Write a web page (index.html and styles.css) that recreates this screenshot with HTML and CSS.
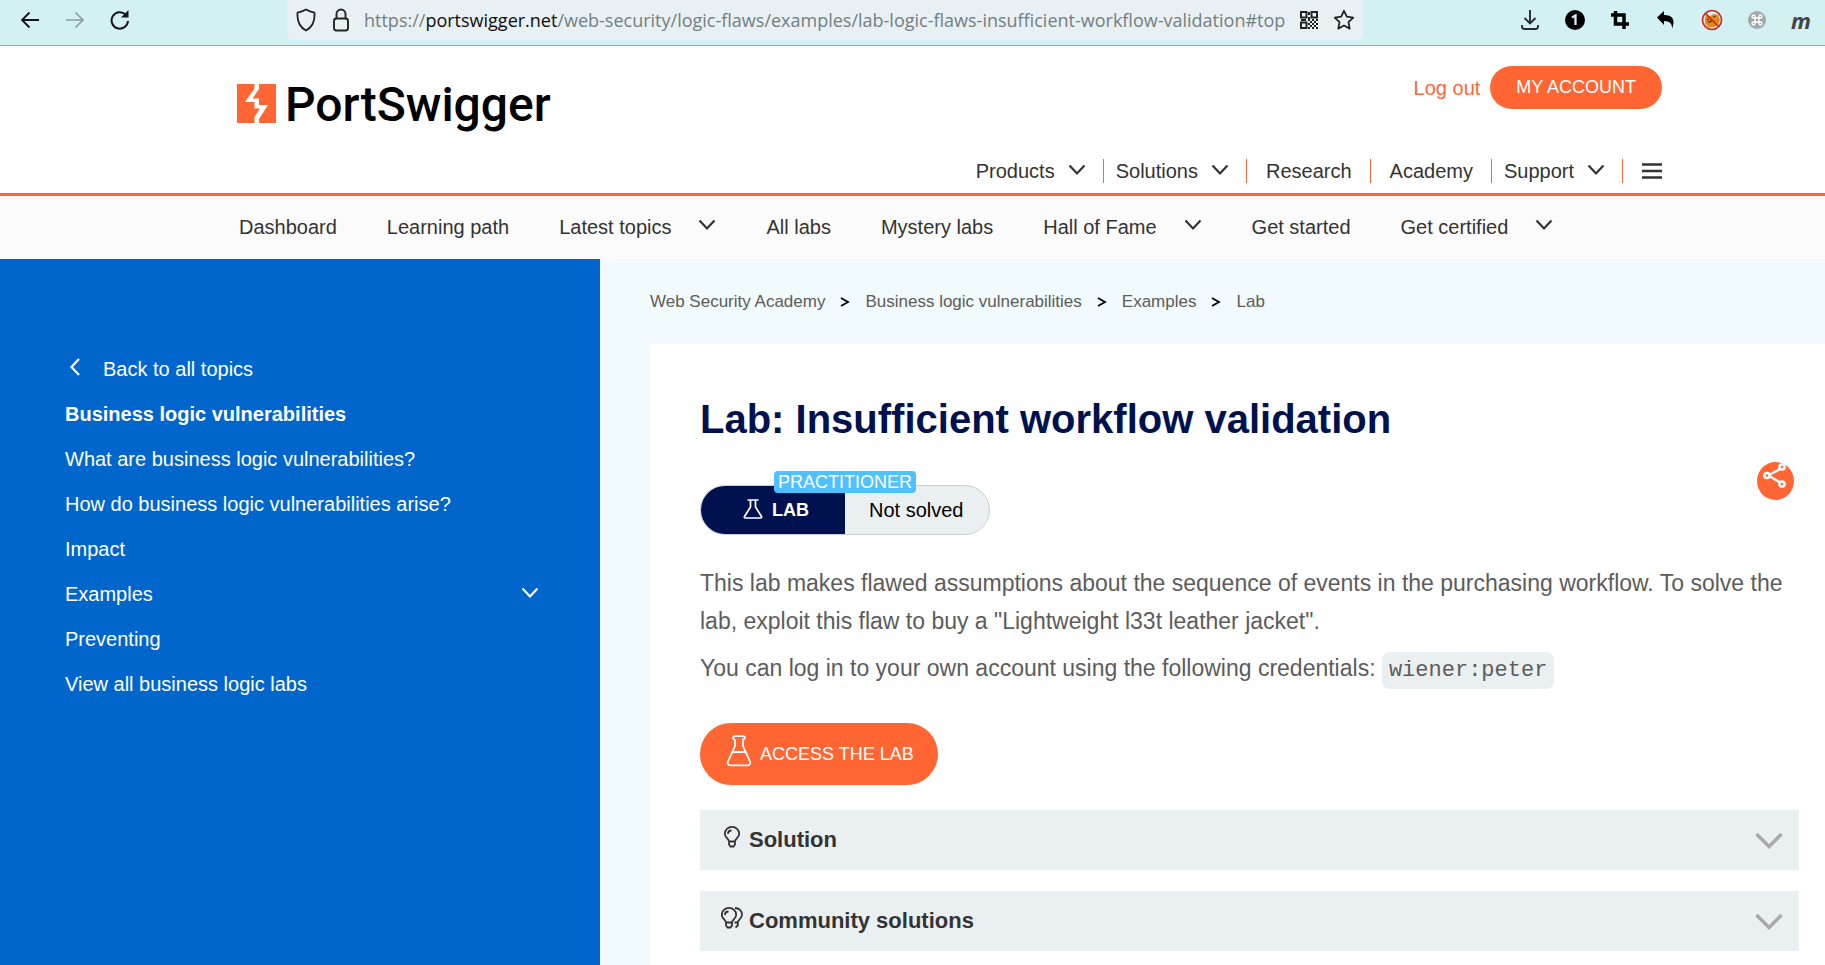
FILE: index.html
```html
<!DOCTYPE html>
<html lang="en">
<head>
<meta charset="utf-8">
<title>Lab: Insufficient workflow validation</title>
<link rel="stylesheet" href="styles.css">
</head>
<body>
<svg class="defs" aria-hidden="true">
  <symbol id="chev" viewBox="0 0 18 12"><path d="M1.5 1.5 9 9.5l7.500-8" fill="none" stroke="currentColor" stroke-width="2.200"/></symbol>
</svg>

<div class="browser">
  <div class="nav-buttons">
    <button aria-label="Back"><svg width="20" height="20" viewBox="0 0 20 20"><path d="M19 10H2M9.500 2.500 2 10l7.500 7.500" fill="none" stroke="#15141a" stroke-width="1.800"/></svg></button>
    <button aria-label="Forward"><svg width="20" height="20" viewBox="0 0 20 20"><path d="M1 10h17M10.500 2.500 18 10l-7.500 7.500" fill="none" stroke="#8b9a9c" stroke-width="1.600"/></svg></button>
    <button aria-label="Reload"><svg width="20" height="22" viewBox="0 0 20 22"><path d="M15.500 5.500A8.200 8.200 0 1 0 18 12" fill="none" stroke="#15141a" stroke-width="2"/><path d="M18.500 1v7.500H11z" fill="#15141a"/></svg></button>
  </div>
  <div class="urlbar">
    <svg width="20" height="24" viewBox="0 0 20 24"><path d="M10 1.500C12.500 3 15 4 18.500 4.700c.5 7-1.500 14-8.500 17.800C3 18.700 1 11.700 1.500 4.700 5 4 7.500 3 10 1.500z" fill="none" stroke="#222" stroke-width="1.800" stroke-linejoin="round"/></svg>
    <svg class="lock" width="18" height="24" viewBox="0 0 18 24"><rect x="2" y="10.500" width="14" height="12" rx="2.500" fill="none" stroke="#222" stroke-width="1.900"/><path d="M4.500 10V6a4.500 4.500 0 0 1 9 0v4" fill="none" stroke="#222" stroke-width="1.900"/></svg>
    <span class="url">https://<b>portswigger.net</b>/web-security/logic-flaws/examples/lab-logic-flaws-insufficient-workflow-validation#top</span>
    <svg width="18" height="18" viewBox="0 0 18 18" fill="#222"><path fill-rule="evenodd" d="M0 0h7.500v7.500H0zM2 2v3.500h3.500V2zM10.500 0H18v7.500h-7.500zM12.500 2v3.500H16V2zM0 10.500h7.500V18H0zM2 12.500V16h3.500v-3.500z"/><path d="M8 1h2v3H8zM8 6h2v4H8zM1 8h5v2H1zM12 8h2v2h-2zM16 8h2v2h-2zM10 10h2v2h-2zM14 10h2v2h-2zM12 12h2v2h-2zM16 12h2v2h-2zM8 12h2v2H8zM10 14h2v2h-2zM14 14h2v2h-2zM12 16h2v2h-2zM16 16h2v2h-2zM8 16h2v2H8z"/></svg>
    <svg class="star" width="22" height="22" viewBox="0 0 22 22"><path d="m11 1.800 2.800 5.900 6.400.9-4.700 4.500 1.200 6.500L11 16.500l-5.700 3.100 1.200-6.500L1.800 8.600l6.400-.9z" fill="none" stroke="#222" stroke-width="1.800" stroke-linejoin="round"/></svg>
  </div>
  <div class="extensions">
    <button aria-label="Downloads"><svg width="20" height="20" viewBox="0 0 20 20"><path d="M10 0v13M4.500 8l5.500 5.500L15.500 8M2 15v1.500A2.500 2.500 0 0 0 4.500 19h11a2.500 2.500 0 0 0 2.500-2.500V15" fill="none" stroke="#2b2a33" stroke-width="1.900"/></svg></button>
    <button aria-label="Accounts"><svg width="20" height="20" viewBox="0 0 20 20"><circle cx="10" cy="10" r="10" fill="#000"/><path d="M7 7.500 10.500 5.500V15" fill="none" stroke="#d3f0f3" stroke-width="2.300"/></svg></button>
    <button aria-label="Crop"><svg width="20" height="20" viewBox="0 0 20 20"><path d="M1 5h13v14M5.500 1v13H19" fill="none" stroke="#000" stroke-width="3.500"/></svg></button>
    <button aria-label="Undo"><svg width="20" height="20" viewBox="0 0 20 20"><path d="M1 7.500 8 1v4c8 0 12 4 8 14 .5-5-2-8-8-8v4z" fill="#000"/></svg></button>
    <button aria-label="Blocker"><svg width="22" height="22" viewBox="0 0 22 22"><path d="m4 9 2-3 3 1 4-2 4 1 2 5-2 5-4 2H7l-3-4z" fill="#e88519"/><path d="m6 11 2-1m4-2 3-1m-8 6 4-1" stroke="#444" fill="none" stroke-width="1.300"/><circle cx="11" cy="11" r="9.500" fill="none" stroke="#d12a1f" stroke-width="1.700"/><path d="m4.500 4.500 13 13" stroke="#d12a1f" stroke-width="1.700"/></svg></button>
    <button aria-label="Command"><svg width="18" height="18" viewBox="0 0 18 18"><circle cx="9" cy="9" r="9" fill="#a4a8a9"/><path d="M7 7H5.500A1.500 1.500 0 1 1 7 5.500v7A1.500 1.500 0 1 1 5.500 11h7a1.500 1.500 0 1 1-1.500 1.500v-7A1.500 1.500 0 1 1 12.500 7z" fill="none" stroke="#fff" stroke-width="1.300"/></svg></button>
    <button class="ext-m">m</button>
  </div>
</div>

<header class="header">
  <a class="logo" href="#" aria-label="PortSwigger">
    <svg width="39" height="39" viewBox="0 0 39 39"><path fill="#ff6633" d="M0 0h39v39H0z"/><path fill="#fff" d="M17.500 0H22v5l-6.500 9.500H22v6.500h9L22 35v4h-4.500v-6l5.500-8.500h-5.500V18H8l9.500-13.500z"/></svg>
    <span>PortSwigger</span>
  </a>
  <div class="header-right">
    <div class="account"><a class="logout" href="#">Log out</a><a class="pill-btn" href="#">MY ACCOUNT</a></div>
    <nav class="topnav">
      <button class="drop">Products<svg class="chev"><use href="#chev"/></svg></button>
      <button class="drop">Solutions<svg class="chev"><use href="#chev"/></svg></button>
      <a href="#">Research</a>
      <a href="#">Academy</a>
      <button class="drop">Support<svg class="chev"><use href="#chev"/></svg></button>
      <button class="burger" aria-label="Menu"><svg width="20" height="16" viewBox="0 0 20 16"><path d="M0 1.500h20M0 8h20M0 14.500h20" stroke="#333332" stroke-width="2.500"/></svg></button>
    </nav>
  </div>
</header>

<nav class="subnav">
  <a href="#">Dashboard</a>
  <a href="#">Learning path</a>
  <button>Latest topics<svg class="chev"><use href="#chev"/></svg></button>
  <a href="#">All labs</a>
  <a href="#">Mystery labs</a>
  <button>Hall of Fame<svg class="chev"><use href="#chev"/></svg></button>
  <a href="#">Get started</a>
  <button>Get certified<svg class="chev"><use href="#chev"/></svg></button>
</nav>

<div class="layout">
  <aside class="sidebar">
    <a class="back" href="#"><svg width="12" height="18" viewBox="0 0 12 18"><path d="M10 1 2.500 9l7.500 8" fill="none" stroke="currentColor" stroke-width="2.200"/></svg>Back to all topics</a>
    <a class="current" href="#">Business logic vulnerabilities</a>
    <a href="#">What are business logic vulnerabilities?</a>
    <a href="#">How do business logic vulnerabilities arise?</a>
    <a href="#">Impact</a>
    <button>Examples<svg class="chev"><use href="#chev"/></svg></button>
    <a href="#">Preventing</a>
    <a href="#">View all business logic labs</a>
  </aside>
  <main class="main">
    <nav class="crumbs" aria-label="Breadcrumb">
      <a href="#">Web Security Academy</a><svg class="sep" viewBox="0 0 10 10"><path d="m1 1 7 4-7 4" fill="none" stroke="#000" stroke-width="1.800"/></svg><a href="#">Business logic vulnerabilities</a><svg class="sep" viewBox="0 0 10 10"><path d="m1 1 7 4-7 4" fill="none" stroke="#000" stroke-width="1.800"/></svg><a href="#">Examples</a><svg class="sep" viewBox="0 0 10 10"><path d="m1 1 7 4-7 4" fill="none" stroke="#000" stroke-width="1.800"/></svg><a href="#">Lab</a>
    </nav>
    <article class="panel">
      <h1>Lab: Insufficient workflow validation</h1>
      <div class="status-row">
        <div class="status">
          <span class="status-lab"><svg width="20" height="20" viewBox="0 0 20 20"><path d="M4.500 1h11M7.500 1v7L1.500 17.500c-.4 1 0 1.500 1 1.500h15c1 0 1.400-.5 1-1.500L12.500 8V1" fill="none" stroke="#fff" stroke-width="1.700"/></svg>LAB</span>
          <span class="status-text">Not solved</span>
          <span class="level">PRACTITIONER</span>
        </div>
        <button class="share" aria-label="Share"><svg width="24" height="26" viewBox="0 0 24 26"><g fill="none" stroke="#fff" stroke-width="2.500"><path d="M7 12.500 17 7M7 14.500l10 6"/><circle cx="4" cy="13.500" r="2.600"/><circle cx="19" cy="5" r="2.600"/><circle cx="19" cy="22" r="2.600"/></g></svg></button>
      </div>
      <p>This lab makes flawed assumptions about the sequence of events in the purchasing workflow. To solve the lab, exploit this flaw to buy a "Lightweight l33t leather jacket".</p>
      <p>You can log in to your own account using the following credentials: <code>wiener:peter</code></p>
      <a class="access" href="#"><svg width="26" height="32" viewBox="0 0 26 32"><path d="M9 4.500C6.500 4.500 6.500 1.200 9 1.200h8c2.500 0 2.500 3.300 0 3.300V11l7 15.500c.8 2-.3 3.800-2 3.800H4c-1.700 0-2.800-1.800-2-3.800L9 11V4.500M6.500 17h13" fill="none" stroke="#fff" stroke-width="1.800"/></svg>ACCESS THE LAB</a>
      <button class="fold"><svg width="22" height="22" viewBox="0 0 22 22"><g fill="none" stroke="#333332" stroke-width="1.800"><path d="M8 15.500c0-3-4.200-3.500-4.200-7.800a7.200 6.800 0 0 1 14.400 0c0 4.300-4.200 4.800-4.200 7.800zM8 15v3.500l1.500 2h3l1.500-2V15M7 8c0-2 1.500-3.500 3.500-3.500"/></g></svg><span>Solution</span><svg class="big" viewBox="0 0 28 17"><path d="m1.500 2 12.500 12.500L26.500 2" fill="none" stroke="#a9a9a9" stroke-width="3.500"/></svg></button>
      <button class="fold"><svg width="22" height="22" viewBox="0 0 22 22"><g fill="none" stroke="#333332" stroke-width="1.800"><path d="M5 15.500c0-3-4.200-3.500-4.200-7.800a7.200 6.800 0 0 1 14.400 0c0 4.300-4.200 4.800-4.200 7.800zM5 15v3.500l1.500 2h3l1.500-2V15M4 8c0-2 1.500-3.500 3.500-3.500M14 1c4 0 7 3 7 6.700 0 4.300-4.200 4.800-4.200 7.800v3l-2.300 2M13.500 15.500h3.300"/></g></svg><span>Community solutions</span><svg class="big" viewBox="0 0 28 17"><path d="m1.500 2 12.500 12.500L26.500 2" fill="none" stroke="#a9a9a9" stroke-width="3.500"/></svg></button>
    </article>
  </main>
</div>
</body>
</html>
```
FILE: styles.css
```css
* { box-sizing: border-box; }
body {
  margin: 0;
  min-height: 100vh;
  display: flex;
  flex-direction: column;
  background: #fff;
  color: #333332;
  font: 20px/24px "Liberation Sans", Arial, sans-serif;
}
a { color: inherit; text-decoration: none; }
button { font: inherit; color: inherit; background: none; border: 0; padding: 0; text-align: left; }
svg { display: block; flex: none; }
.defs { display: none; }
.chev { width: 18px; height: 12px; margin-bottom: 3px; }

.browser { display: flex; height: 46px; padding-bottom: 5px; background: #d3f0f3; border-bottom: 1px solid #96a8aa; }
.nav-buttons { display: flex; align-items: center; gap: 25px; width: 287px; padding-left: 20px; }
.urlbar { display: flex; align-items: center; width: 1076px; padding-left: 9px; background: #e9f0f4; border-radius: 0 0 6px 6px; }
.lock { margin: 0 14px 0 16px; }
.url { flex: 1; font: 18px/24px "Open Sans", sans-serif; color: #727f82; white-space: nowrap; }
.url b { font-weight: 400; color: #0c0c0d; }
.star { margin: 0 8px 0 15px; }
.extensions { display: flex; flex: 1; align-items: center; justify-content: space-between; padding: 0 14px 0 157px; }
.ext-m { font: italic 700 22px/24px "Open Sans", sans-serif; color: #444; }

.header { display: flex; justify-content: space-between; height: 150px; padding: 0 163px 0 237px; border-bottom: 3px solid #ff6633; }
.logo { display: flex; align-items: flex-start; gap: 9px; padding-top: 38px; color: #000; }
.logo span { font: 500 48px/42px Roboto, sans-serif; }
.header-right { display: flex; flex-direction: column; align-items: flex-end; justify-content: space-between; padding: 20px 0 10px; }
.account { display: flex; align-items: center; gap: 10px; }
.logout { color: #ff6633; }
.pill-btn { padding: 10px 26px; border-radius: 22px; background: #ff6633; color: #fff; font-size: 18px; line-height: 23px; }
.topnav { display: flex; align-items: center; }
.topnav > * { padding: 0 18px 0 19px; border-right: 1px solid #ff6633; }
.topnav .drop { display: flex; align-items: center; gap: 13px; padding: 0 17px 0 12px; }
.topnav .burger { padding: 0 0 0 19px; border: 0; }

.subnav { display: flex; align-items: center; gap: 50px; height: 63px; padding: 0 239px 2px; background: #fbfbfb; white-space: nowrap; }
.subnav button { display: flex; align-items: center; gap: 27px; }

.layout { display: flex; flex: 1; }
.sidebar { display: flex; flex-direction: column; gap: 21px; width: 600px; padding: 98px 61px 0 65px; background: #0066cc; color: #fff; }
.sidebar button { display: flex; align-items: center; justify-content: space-between; }
.back { display: flex; align-items: center; gap: 22px; padding-left: 4px; }
.back svg { margin-bottom: 5px; }
.current { font-weight: 700; }
.main { flex: 1; padding-left: 50px; background: #f1fafc; }
.crumbs { display: flex; align-items: center; gap: 14px; height: 85px; color: #5c5c5b; font-size: 17px; }
.sep { width: 12px; height: 10px; }
.panel { min-height: 621px; padding: 50px 26px 14px 50px; background: #fff; }
h1 { margin: 0 0 41px; font-size: 40px; line-height: 50px; color: #00114f; }
.status-row { display: flex; justify-content: space-between; align-items: flex-start; margin-bottom: 29px; }
.status { position: relative; display: flex; height: 50px; border: 1px solid #c9cfd1; border-radius: 25px; background: #eaeff2; color: #000; }
.status-lab { display: flex; align-items: center; gap: 9px; padding: 0 36px 0 42px; border-radius: 24px 0 0 24px; background: #00114f; color: #fff; font-size: 18px; font-weight: 700; }
.status-lab svg { margin-bottom: 3px; }
.status-text { padding: 12px 25px 12px 24px; }
.level { position: absolute; left: 73px; top: -15px; padding: 0 4px; border-radius: 4px; background: #4fc1ff; color: #fff; font-size: 18px; line-height: 22px; }
.share { width: 37px; height: 38px; margin: -23px 5px 0 0; padding: 0 0 12px 6px; border-radius: 50%; background: #ff6633; }
p { margin: 0 0 9px; color: #5c5c5b; font-size: 23px; line-height: 38px; }
code { padding: 6px 7px; border-radius: 8px; background: #eaeff2; font: 22px/26px "Liberation Mono", monospace; }
.access { display: flex; align-items: center; gap: 8px; width: fit-content; margin: 36px 0 25px; padding: 15px 24px 15px 26px; border-radius: 31px; background: #ff6633; color: #fff; font-size: 18px; }
.access svg { margin: -3px 0 3px; }
.fold { display: flex; align-items: center; gap: 6px; width: 100%; height: 60px; margin-bottom: 21px; padding: 0 16px 0 21px; background: #eaeff2; font-size: 22px; font-weight: 700; }
.fold svg:first-child { margin-bottom: 7px; }
.fold span { flex: 1; }
.big { width: 28px; height: 17px; }
```
